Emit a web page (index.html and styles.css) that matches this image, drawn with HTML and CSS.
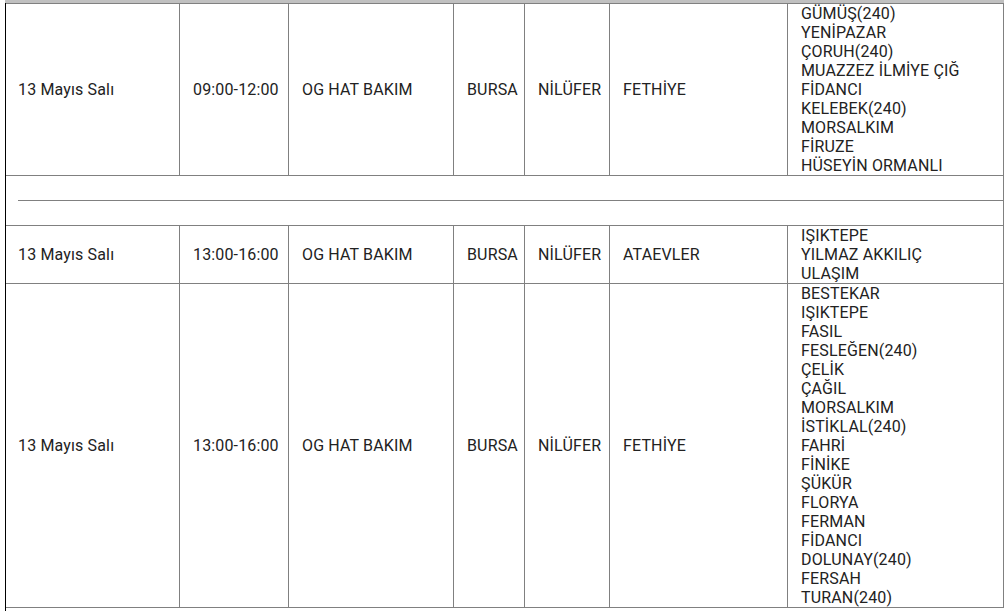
FILE: index.html
```html
<!DOCTYPE html>
<html lang="tr">
<head>
<meta charset="utf-8">
<title>Kesinti Listesi</title>
<link rel="stylesheet" href="styles.css">
</head>
<body>
<div class="band"></div>
<div class="frame">
<table class="grid">
<colgroup>
<col class="c1"><col class="c2"><col class="c3"><col class="c4"><col class="c5"><col class="c6"><col class="c7">
</colgroup>
<tbody>
<tr>
<td>13 Mayıs Salı</td>
<td>09:00-12:00</td>
<td>OG HAT BAKIM</td>
<td>BURSA</td>
<td>NİLÜFER</td>
<td>FETHİYE</td>
<td class="streets">GÜMÜŞ(240)<br>YENİPAZAR<br>ÇORUH(240)<br>MUAZZEZ İLMİYE ÇIĞ<br>FİDANCI<br>KELEBEK(240)<br>MORSALKIM<br>FİRUZE<br>HÜSEYİN ORMANLI</td>
</tr>
<tr>
<td class="sep" colspan="7"><div class="rule"></div></td>
</tr>
<tr>
<td>13 Mayıs Salı</td>
<td>13:00-16:00</td>
<td>OG HAT BAKIM</td>
<td>BURSA</td>
<td>NİLÜFER</td>
<td>ATAEVLER</td>
<td class="streets">IŞIKTEPE<br>YILMAZ AKKILIÇ<br>ULAŞIM</td>
</tr>
<tr>
<td>13 Mayıs Salı</td>
<td>13:00-16:00</td>
<td>OG HAT BAKIM</td>
<td>BURSA</td>
<td>NİLÜFER</td>
<td>FETHİYE</td>
<td class="streets">BESTEKAR<br>IŞIKTEPE<br>FASIL<br>FESLEĞEN(240)<br>ÇELİK<br>ÇAĞIL<br>MORSALKIM<br>İSTİKLAL(240)<br>FAHRİ<br>FİNİKE<br>ŞÜKÜR<br>FLORYA<br>FERMAN<br>FİDANCI<br>DOLUNAY(240)<br>FERSAH<br>TURAN(240)</td>
</tr>
</tbody>
</table>
</div>
</body>
</html>
```

FILE: styles.css
```css
html, body {
  margin: 0;
  padding: 0;
  background: #ffffff;
}

body {
  font-family: Roboto, "Liberation Sans", Arial, sans-serif;
  font-size: 16px;
  line-height: 19px;
  letter-spacing: 0.15px;
  color: #222222;
}

.band {
  margin-left: 5px;
  width: 999px;
  height: 3px;
  background: #c0c0c0;
}

.frame {
  margin-left: 5px;
  width: 998px;
  border-left: 1px solid #000000;
  padding-bottom: 20px;
}

.grid {
  width: 998px;
  table-layout: fixed;
  border-collapse: separate;
  border-spacing: 0;
  border-top: 1px solid #808080;
}

.c1 { width: 174px; }
.c2 { width: 109px; }
.c3 { width: 165px; }
.c4 { width: 71px; }
.c5 { width: 85px; }
.c6 { width: 178px; }
.c7 { width: 216px; }

.grid td {
  box-sizing: border-box;
  padding: 0 0 0 13px;
  border-right: 1px solid #808080;
  border-bottom: 1px solid #808080;
  vertical-align: middle;
  white-space: nowrap;
  overflow: hidden;
}

.grid td:first-child {
  padding-left: 12px;
}

.grid td.sep {
  padding: 24px 0 24px 12px;
}

.rule {
  height: 0;
  border-top: 1px solid #808080;
}
```
